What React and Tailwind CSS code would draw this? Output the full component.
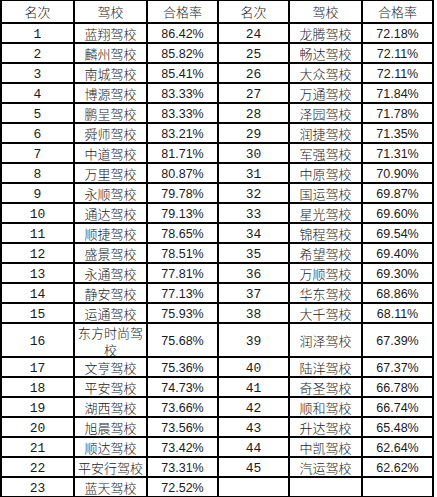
const left = [
  ['1', '蓝翔驾校', '86.42%'],
  ['2', '麟州驾校', '85.82%'],
  ['3', '南城驾校', '85.41%'],
  ['4', '博源驾校', '83.33%'],
  ['5', '鹏呈驾校', '83.33%'],
  ['6', '舜师驾校', '83.21%'],
  ['7', '中道驾校', '81.71%'],
  ['8', '万里驾校', '80.87%'],
  ['9', '永顺驾校', '79.78%'],
  ['10', '通达驾校', '79.13%'],
  ['11', '顺捷驾校', '78.65%'],
  ['12', '盛景驾校', '78.51%'],
  ['13', '永通驾校', '77.81%'],
  ['14', '静安驾校', '77.13%'],
  ['15', '运通驾校', '75.93%'],
  ['16', '东方时尚驾校', '75.68%'],
  ['17', '文亨驾校', '75.36%'],
  ['18', '平安驾校', '74.73%'],
  ['19', '湖西驾校', '73.66%'],
  ['20', '旭晨驾校', '73.56%'],
  ['21', '顺达驾校', '73.42%'],
  ['22', '平安行驾校', '73.31%'],
  ['23', '蓝天驾校', '72.52%'],
]

const right = [
  ['24', '龙腾驾校', '72.18%'],
  ['25', '畅达驾校', '72.11%'],
  ['26', '大众驾校', '72.11%'],
  ['27', '万通驾校', '71.84%'],
  ['28', '泽园驾校', '71.78%'],
  ['29', '润捷驾校', '71.35%'],
  ['30', '军强驾校', '71.31%'],
  ['31', '中原驾校', '70.90%'],
  ['32', '国运驾校', '69.87%'],
  ['33', '星光驾校', '69.60%'],
  ['34', '锦程驾校', '69.54%'],
  ['35', '希望驾校', '69.40%'],
  ['36', '万顺驾校', '69.30%'],
  ['37', '华东驾校', '68.86%'],
  ['38', '大千驾校', '68.11%'],
  ['39', '润泽驾校', '67.39%'],
  ['40', '陆洋驾校', '67.37%'],
  ['41', '奇圣驾校', '66.78%'],
  ['42', '顺和驾校', '66.74%'],
  ['43', '升达驾校', '65.48%'],
  ['44', '中凯驾校', '62.64%'],
  ['45', '汽运驾校', '62.62%'],
  ['', '', ''],
]

const cjk = "font-['SimSun','Noto_Sans_CJK_SC',sans-serif] text-[13px] font-light"
const num = "font-['Liberation_Mono','Noto_Sans_CJK_SC',monospace] text-[13px]"
const pct = "font-['Liberation_Sans','Noto_Sans_CJK_SC',sans-serif] text-[12.5px]"

const Cell = ({ children, className = '' }) => (
  <div className={`bg-white flex items-center justify-center text-center text-[#1a1a1a] leading-[17px] ${className}`}>
    {children}
  </div>
)

export default function App() {
  return (
    <div className="w-[437px] h-[497px] bg-white">
      <div className="w-[434px] bg-black px-[2px] pt-[1px] pb-[1px] grid grid-cols-[71px_71px_69px_69px_71px_69px] grid-rows-[21px_repeat(15,18px)_32px_repeat(7,18px)] gap-[2px]">
        <Cell className={cjk}>名次</Cell>
        <Cell className={cjk}>驾校</Cell>
        <Cell className={cjk}>合格率</Cell>
        <Cell className={cjk}>名次</Cell>
        <Cell className={cjk}>驾校</Cell>
        <Cell className={cjk}>合格率</Cell>
        {left.map((row, i) => {
          const r = right[i]
          return [
            <Cell key={`a${i}`} className={`${num} pt-[2px]`}>{row[0]}</Cell>,
            <Cell key={`b${i}`} className={`${cjk} pt-[1px]`}>{row[1]}</Cell>,
            <Cell key={`c${i}`} className={`${pct} pt-[2px]`}>{row[2]}</Cell>,
            <Cell key={`d${i}`} className={`${num} pt-[2px]`}>{r[0]}</Cell>,
            <Cell key={`e${i}`} className={`${cjk} pt-[1px]`}>{r[1]}</Cell>,
            <Cell key={`f${i}`} className={`${pct} pt-[2px]`}>{r[2]}</Cell>,
          ]
        })}
      </div>
    </div>
  )
}
